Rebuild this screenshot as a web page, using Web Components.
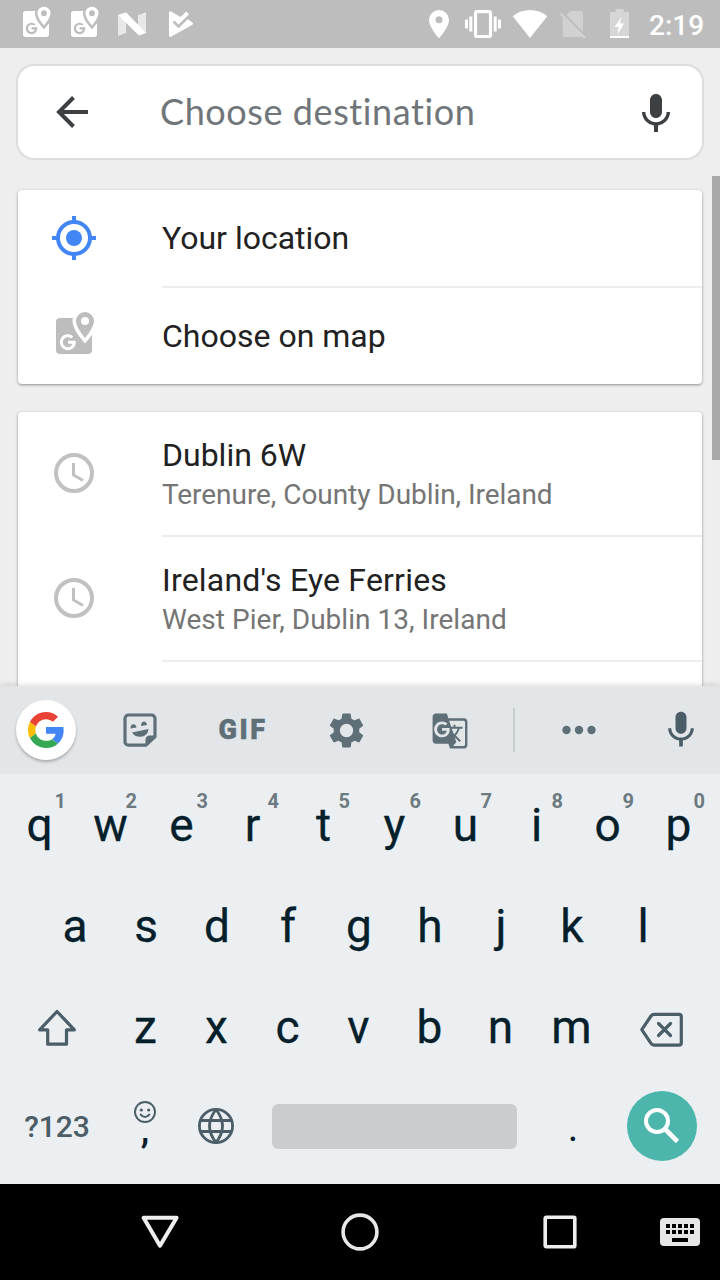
<!DOCTYPE html>
<html lang="en">
<head>
<meta charset="utf-8">
<title>Choose destination</title>
<style>
html,body{margin:0;padding:0}
body{width:720px;height:1280px;overflow:hidden;background:#eee;font-family:Roboto,"Noto Sans",sans-serif}
</style>
</head>
<body>
<directions-screen></directions-screen>
<script>
const MIC='<path fill="currentColor" d="M12 14c1.66 0 2.99-1.34 2.99-3L15 5c0-1.66-1.34-3-3-3S9 3.34 9 5v6c0 1.66 1.34 3 3 3zm5.3-3c0 3-2.54 5.1-5.3 5.1S6.7 14 6.7 11H5c0 3.41 2.72 6.23 6 6.72V21h2v-3.28c3.28-.48 6-3.3 6-6.72h-1.7z"/>';
const MAPS='<rect x="2" y="8" width="36" height="36" rx="4" fill="currentColor"/><path d="M31 2a9 9 0 0 0-9 9c0 6.500 9 17 9 17s9-10.500 9-17a9 9 0 0 0-9-9z" fill="currentColor" stroke="var(--gap,#fff)" stroke-width="7"/><path d="M31 2a9 9 0 0 0-9 9c0 6.500 9 17 9 17s9-10.500 9-17a9 9 0 0 0-9-9z" fill="currentColor"/><circle cx="31" cy="11" r="4" fill="var(--gap,#fff)"/><path d="M18.300 27.500a6.500 6.500 0 1 0 2 4.700h-6.300" fill="none" stroke="var(--gap,#fff)" stroke-width="3"/>';
/* name: [viewBox, width, height, markup] */
const ICONS={
  'st-maps':['0 0 48 48',48,48,`<g transform="translate(1.560 5.200) scale(.722)">${MAPS}</g>`],
  'st-n':['116 0 48 48',48,48,'<path fill="#fff" opacity=".65" d="M118 15l8 7v11l-8 3zM138 15l8-2.800v21l-8-6z"/><path fill="#fff" d="M118 15l8-2.800 20 20.800-7 2.600z"/>'],
  'st-play':['164 0 48 48',48,48,'<path fill="#fff" d="M169 13q0-2.500 2.200-1.500l9.300 5.500 5.700-5.500 2.600 2.600L188 19.500l4.400 2.900q1.500 1.200 0 2.400L171 36.800q-2 .7-2-1.500z"/><path fill="none" stroke="#bdbdbd" stroke-width="2.600" d="M173.500 21.500l5 5L189.500 15.700"/>'],
  'st-pin':['424 0 32 48',32,48,'<path fill="#fff" fill-rule="evenodd" d="M439 10a10 10 0 0 0-10 10c0 7.500 10 18.300 10 18.300s10-10.800 10-18.300a10 10 0 0 0-10-10zm0 6.300a3.500 3.500 0 1 1 0 7 3.500 3.500 0 0 1 0-7z"/>'],
  'st-vibrate':['456 0 50 48',50,48,'<rect x="475.500" y="11.700" width="15" height="24.800" rx="1.500" fill="none" stroke="#fff" stroke-width="3.200"/><path fill="#fff" d="M469.300 16.500h3v15h-3zM465 19.500h3v9h-3zM493.700 16.500h3v15h-3zM498 19.500h3v9h-3z"/>'],
  'st-wifi':['506 0 48 48',48,48,'<path fill="#fff" d="M530 38L512.700 16.300C522.500 8 537.500 8 547.300 16.300z"/>'],
  'st-nosim':['554 0 46 48',46,48,'<path fill="#d1d1d1" d="M571 11h10a2 2 0 0 1 2 2v22a2 2 0 0 1-2 2h-16.300a2 2 0 0 1-2-2V18z"/><path stroke="#bdbdbd" stroke-width="2.500" d="M562 12l24 24.500"/><path stroke="#d1d1d1" stroke-width="2.300" d="M560.500 13.500l24.500 24.500"/>'],
  'st-battery':['600 0 40 48',40,48,'<path fill="#d6d6d6" d="M615.700 9h8v3h5.300v24h-19V12h5.700z"/><path fill="#fff" d="M610 36h19v2h-19zM621.500 17l-6.800 10h4l-1.200 7.500 6.500-11h-4z"/>'],
  back:['54 94 36 36',36,36,'<path fill="none" stroke="#3c4043" stroke-width="4" d="M88 112H59M73.500 97.500L59 112l14.500 14.500"/>'],
  mic:['0 0 24 24',48,48,MIC],
  'mic-small':['0 0 24 24',44,44,MIC],
  location:['0 0 48 48',48,48,'<g fill="none" stroke="#4285f4" stroke-width="4"><circle cx="24" cy="24" r="16"/><path d="M24 2v5M24 41v5M2 24h5M41 24h5"/></g><circle cx="24" cy="24" r="8" fill="#4285f4"/>'],
  maps:['0 0 42 46',42,46,MAPS],
  clock:['0 0 48 48',48,48,'<g fill="none" stroke="#c1c1c1"><circle cx="24" cy="24" r="18" stroke-width="4"/><path stroke-width="3" d="M23.500 14v12l9.500 5.500"/></g>'],
  google:['0 0 48 48',36,36,'<path fill="#EA4335" d="M24 9.500c3.540 0 6.710 1.220 9.210 3.600l6.850-6.850C35.900 2.380 30.470 0 24 0 14.620 0 6.510 5.380 2.560 13.220l7.980 6.190C12.430 13.720 17.740 9.500 24 9.500z"/><path fill="#4285F4" d="M47.500 24.550c0-1.570-.15-3.090-.38-4.550H24v9.020h12.940c-.58 2.960-2.260 5.480-4.780 7.180l7.730 6c4.510-4.180 7.610-10.360 7.610-17.650z"/><path fill="#FBBC05" d="M10.530 28.590c-.48-1.450-.76-2.990-.76-4.590s.27-3.140.76-4.590l-7.980-6.190C.92 16.460 0 20.120 0 24c0 3.880.92 7.540 2.560 10.780l7.970-6.190z"/><path fill="#34A853" d="M24 48c6.480 0 11.930-2.130 15.890-5.810l-7.730-6c-2.150 1.450-4.920 2.300-8.160 2.300-6.260 0-11.570-4.220-13.470-9.910l-7.980 6.190C6.510 42.620 14.620 48 24 48z"/>'],
  sticker:['122 712 36 36',36,36,'<path fill="none" stroke="currentColor" stroke-width="3.200" stroke-linejoin="round" d="M128.500 715h23a3.500 3.500 0 0 1 3.500 3.500V736.500l-9 8.700h-17.500a3.500 3.500 0 0 1-3.500-3.500v-23.200a3.500 3.500 0 0 1 3.500-3.500z"/><path fill="currentColor" d="M145.500 746v-6q0-4.500 4.500-4.500h6v1.500zM130.500 728.500q0-4 2.800-4.200 2.700 0 3.200 3.200zM141 726q0-4.300 2.800-4.600 2.700 0 3.300 3.600zM132 732.500l16.500-3.500q-.5 7-7.500 7.700-6.500.3-9-4.200z"/>'],
  gear:['0 0 24 24',41,41,'<path fill="currentColor" d="M19.430 12.980c.04-.32.07-.64.07-.98s-.03-.66-.07-.98l2.110-1.650c.19-.15.24-.42.12-.64l-2-3.460c-.12-.22-.39-.3-.61-.22l-2.490 1c-.52-.4-1.080-.73-1.690-.98l-.38-2.650C14.460 2.180 14.250 2 14 2h-4c-.25 0-.46.18-.49.42l-.38 2.650c-.61.25-1.170.59-1.690.98l-2.490-1c-.23-.09-.49 0-.61.22l-2 3.460c-.13.22-.07.49.12.64l2.110 1.650c-.04.32-.07.65-.07.98s.03.66.07.98l-2.110 1.650c-.19.15-.24.42-.12.64l2 3.460c.12.22.39.3.61.22l2.490-1c.52.4 1.080.73 1.690.98l.38 2.650c.03.24.24.42.49.42h4c.25 0 .46-.18.49-.42l.38-2.650c.61-.25 1.170-.59 1.690-.98l2.490 1c.23.09.49 0 .61-.22l2-3.460c.12-.22.07-.49-.12-.64l-2.110-1.650zM12 15.900a3.900 3.900 0 1 1 0-7.800 3.900 3.900 0 0 1 0 7.800z"/>'],
  translate:['0 0 24 24',38,38,'<path fill="currentColor" d="M21 4H11l-1-3H3c-1.100 0-2 .9-2 2v15c0 1.100.9 2 2 2h8l1 3h9c1.100 0 2-.9 2-2V6c0-1.100-.9-2-2-2zM7 16c-2.760 0-5-2.240-5-5s2.240-5 5-5c1.350 0 2.480.5 3.350 1.300L9.030 8.570c-.38-.36-1.040-.78-2.030-.78-1.740 0-3.150 1.440-3.150 3.210S5.260 14.210 7 14.210c2.010 0 2.840-1.440 2.920-2.410H7v-1.710h4.680c.07.31.12.61.12 1.020C11.800 13.970 9.890 16 7 16zm6.170-5.420h3.700c-.43 1.250-1.110 2.430-2.050 3.470-.31-.35-.6-.72-.86-1.100l-.79-2.370zm8.330 9.920c0 .55-.45 1-1 1H14l2-2.500-1.040-3.100 3.100 3.100.92-.92-3.300-3.250.02-.02c1.130-1.250 1.930-2.690 2.400-4.220H20v-1.300h-4.530V8h-1.290v1.290h-1.440L11.460 5.500h9.040c.55 0 1 .45 1 1v14z"/>'],
  more:['0 0 36 10',36,10,'<g fill="currentColor"><circle cx="5.500" cy="5" r="4.200"/><circle cx="18" cy="5" r="4.200"/><circle cx="30.500" cy="5" r="4.200"/></g>'],
  shift:['36 1008 42 40',42,40,'<path fill="none" stroke="currentColor" stroke-width="3.200" stroke-linejoin="round" d="M57 1011.500L39.600 1029.800H47.700V1044.200H66.500V1029.800H74.400z"/>'],
  backspace:['639 1010 46 40',46,40,'<path fill="none" stroke="currentColor" stroke-width="3.200" stroke-linejoin="round" d="M641.800 1029.700L651 1016q1.200-1.700 3-1.700H679q2.300 0 2.300 2.300v26.200q0 2.300-2.300 2.300H654q-1.800 0-3-1.700z"/><path fill="none" stroke="currentColor" stroke-width="3.200" stroke-linecap="round" d="M658.500 1023.500l12 12M670.500 1023.500l-12 12"/>'],
  smile:['0 0 24 24',24,24,'<g fill="none" stroke="currentColor" stroke-width="1.900"><circle cx="12" cy="12" r="10"/><path stroke-linecap="round" d="M7.600 14.500q4.400 5 8.800 0"/></g><circle cx="8.300" cy="10" r="1.600" fill="currentColor"/><circle cx="15.700" cy="10" r="1.600" fill="currentColor"/>'],
  globe:['0 0 38 38',38,38,'<g fill="none" stroke="currentColor" stroke-width="2.800"><circle cx="19" cy="19" r="16.600"/><path d="M3.500 13.500h31M3.500 24.500h31M19 2.500Q6 19 19 35.500M19 2.500Q32 19 19 35.500"/></g>'],
  search:['627 1091 70 70',70,70,'<g fill="none" stroke="#fff"><circle cx="657" cy="1121" r="11" stroke-width="4"/><path stroke-width="4.600" d="M665.500 1129.500l12 12"/></g>'],
  'nav-back':['0 0 40 40',40,40,'<path fill="none" stroke="#eee" stroke-width="4" stroke-linejoin="round" d="M3.600 5.800h33L20 33.700z"/>'],
  'nav-home':['0 0 40 40',40,40,'<circle cx="20" cy="20" r="16.900" fill="none" stroke="#e8e8e8" stroke-width="3.600"/>'],
  'nav-recent':['0 0 40 40',40,40,'<rect x="5.200" y="5.200" width="29.600" height="29.600" rx="1" fill="none" stroke="#eee" stroke-width="3.600"/>'],
  'nav-keyboard':['0 0 40 28',40,28,'<rect width="40" height="28" rx="4" fill="#e6e6e6"/><path d="M6 6h4v4H6zM12 6h4v4h-4zM18 6h4v4h-4zM24 6h4v4h-4zM30 6h4v4h-4zM6 12h4v4H6zM12 12h4v4h-4zM18 12h4v4h-4zM24 12h4v4h-4zM30 12h4v4h-4zM12 20h16v4H12z"/>']
};
const define=(name,render)=>customElements.define(name,class extends HTMLElement{
  connectedCallback(){
    if(this.shadowRoot)return;
    this.attachShadow({mode:'open'}).innerHTML=render(this);
  }
});

define('ui-icon',el=>{
  const [vb,w,h,body]=ICONS[el.getAttribute('name')];
  return `<style>:host{display:block;flex:none;width:${w}px;height:${h}px}svg{display:block}</style><svg width="${w}" height="${h}" viewBox="${vb}" aria-hidden="true">${body}</svg>`;
});

define('status-bar',()=>`<style>
:host{display:flex;height:48px;background:#bdbdbd;color:#fff;--gap:#bdbdbd;padding-left:20px;flex:none}
.right{display:flex;margin-left:auto}
.time{width:71px;padding-left:9px;font:500 28px/51px Roboto,sans-serif;white-space:nowrap}
</style><ui-icon name="st-maps"></ui-icon><ui-icon name="st-maps"></ui-icon><ui-icon name="st-n"></ui-icon><ui-icon name="st-play"></ui-icon>
<div class="right"><ui-icon name="st-pin"></ui-icon><ui-icon name="st-vibrate"></ui-icon><ui-icon name="st-wifi"></ui-icon><ui-icon name="st-nosim"></ui-icon><ui-icon name="st-battery"></ui-icon><span class="time">2:19</span></div>`);

define('search-box',()=>`<style>
:host{display:flex;align-items:center;box-sizing:border-box;height:96px;margin:16px 16px 0;padding:0 22px 0 36px;border:2px solid #dadce0;border-radius:18px;background:#fff;flex:none;color:#3c4043}
.hint{margin-left:70px;flex:1;font:400 36px/44px Lato,"Open Sans",sans-serif;color:#70757a;white-space:nowrap;letter-spacing:.58px;padding-bottom:2px}
.mic{padding-top:4px}
</style><ui-icon name="back"></ui-icon><span class="hint"><slot></slot></span><div class="mic"><ui-icon name="mic"></ui-icon></div>`);

define('result-card',()=>`<style>
:host{display:block;margin-bottom:28px;background:#fff;border-radius:4px;box-shadow:0 1px 3px rgba(0,0,0,.4)}
</style><slot></slot>`);

define('result-row',el=>`<style>
:host{display:grid;grid-template-columns:112px 1fr;height:${el.hasAttribute('tall')?125:el.hasAttribute('last')?96:98}px}
.icon{display:grid;place-items:center;color:#bdbdbd;padding-bottom:${{location:2,maps:6,clock:3}[el.getAttribute('icon')]}px;${el.getAttribute('icon')==='maps'?'padding-left:2px':''}}
.text{margin-left:32px;display:flex;flex-direction:column;justify-content:center;box-sizing:border-box;border-bottom:2px solid #ededed;white-space:nowrap}
:host([last]) .text{border-bottom-color:transparent;padding-top:2px}
.title{font-size:32px;line-height:40px;color:#212121;letter-spacing:var(--title-tracking,0)}
.sub{font-size:28px;line-height:38px;color:#757575;padding-top:1px;margin-bottom:-1px;letter-spacing:var(--sub-tracking,-.05px)}
</style><div class="icon"><ui-icon name="${el.getAttribute('icon')}"></ui-icon></div><div class="text"><span class="title"><slot></slot></span>${el.hasAttribute('sub')?`<span class="sub">${el.getAttribute('sub')}</span>`:''}</div>`);

define('result-list',()=>`<style>
:host{display:flex;height:510px;margin-top:16px;overflow:hidden;flex:none}
.cards{flex:1;padding:14px 10px 0 18px}
.bar{width:8px;height:284px;background:#a9a9a9}
</style><div class="cards"><slot></slot></div><div class="bar"></div>`);

define('key-cap',el=>`<style>
:host{display:block;position:relative;height:101px;font-size:46px;line-height:102px;text-align:center;color:#05202b;-webkit-text-stroke:.3px #05202b}
sup{position:absolute;left:50%;margin-left:15px;top:16px;font:700 20px/22px Roboto,sans-serif;color:#6d7a80;-webkit-text-stroke:0}
</style><slot></slot>${el.hasAttribute('hint')?`<sup>${el.getAttribute('hint')}</sup>`:''}`);

define('keyboard-toolbar',()=>`<style>
:host{display:grid;grid-template-columns:92px 96px 108px 101px 106px 21px 110px 86px;height:88px;background:#e2e6e9;color:#5f6f77;place-items:center}
.g{display:grid;place-items:center;width:60px;height:60px;border-radius:50%;background:#fff;box-shadow:0 2px 3px rgba(0,0,0,.25)}
.gif{font:900 27px/30px Roboto,sans-serif;letter-spacing:2.500px;margin-right:-2px;-webkit-text-stroke:.5px currentColor}
.sep{width:2px;height:44px;background:#c8cdd0}
.mic{color:#4b5d66;padding:0 0 0 8px}
.down{padding-top:1px}
</style><div class="g"><ui-icon name="google"></ui-icon></div><ui-icon name="sticker"></ui-icon><span class="gif">GIF</span><div class="down"><ui-icon name="gear"></ui-icon></div><div class="down"><ui-icon name="translate"></ui-icon></div><div class="sep"></div><ui-icon name="more"></ui-icon><div class="mic"><ui-icon name="mic-small"></ui-icon></div>`);

const keys=(s,hints)=>[...s].map((c,i)=>`<key-cap${hints?` hint="${hints[i]}"`:''}>${c}</key-cap>`).join('');
define('soft-keyboard',()=>`<style>
:host{display:block;position:relative;height:498px;background:#ebeff2;color:#4b5d66;box-shadow:0 -1px 6px rgba(0,0,0,.14);flex:none}
.row{display:grid;height:101px}
.r1{grid-template-columns:repeat(10,71px);padding-left:4px}
.r2{grid-template-columns:repeat(9,71px);padding-left:39.500px}
.r3{grid-template-columns:110px repeat(7,71px) 106px;align-items:center}
.r4{grid-template-columns:114px 62px 80px 277px 80px 98px;place-items:center;height:98px}
.shift,.del{display:grid;place-items:center;padding:3px 0 0 4px}
.del{padding:6px 0 0 4px}
.sym{font:500 30px/36px Roboto,sans-serif;padding-top:1px}
.comma{display:grid;justify-items:center;padding-bottom:2px}
.punct{font-size:40px;line-height:40px;color:#05202b}
.comma .punct{font-weight:500;line-height:30px;height:34px;margin-top:-10px}
.comma .punct{font-size:38px;padding-bottom:3px}
.dot{padding-top:4px}
.space{width:245px;height:45px;border-radius:6px;background:#c9cdd0;margin-top:1px}
.go{width:70px;height:70px;border-radius:50%;background:#4db6ac}
</style><keyboard-toolbar></keyboard-toolbar>
<div class="row r1">${keys('qwertyuiop','1234567890')}</div>
<div class="row r2">${keys('asdfghjkl')}</div>
<div class="row r3"><div class="shift"><ui-icon name="shift"></ui-icon></div>${keys('zxcvbnm')}<div class="del"><ui-icon name="backspace"></ui-icon></div></div>
<div class="row r4"><span class="sym">?123</span><div class="comma"><ui-icon name="smile"></ui-icon><span class="punct">,</span></div><ui-icon name="globe"></ui-icon><div class="space"></div><span class="punct dot">.</span><div class="go"><ui-icon name="search"></ui-icon></div></div>`);

define('nav-bar',()=>`<style>
:host{display:grid;grid-template-columns:200px 200px 200px 60px;padding-left:60px;height:96px;background:#000;place-items:center;flex:none}
ui-icon:last-child{justify-self:start}
</style><ui-icon name="nav-back"></ui-icon><ui-icon name="nav-home"></ui-icon><ui-icon name="nav-recent"></ui-icon><ui-icon name="nav-keyboard"></ui-icon>`);

define('directions-screen',()=>`<style>
:host{display:flex;flex-direction:column;width:720px;height:1280px;overflow:hidden;background:#eee}
.wide{--title-tracking:.2px;--sub-tracking:.03px}
</style><status-bar></status-bar><search-box>Choose destination</search-box>
<result-list>
<result-card><result-row icon="location">Your location</result-row><result-row icon="maps" last>Choose on map</result-row></result-card>
<result-card><result-row tall icon="clock" sub="Terenure, County Dublin, Ireland">Dublin 6W</result-row><result-row class="wide" tall icon="clock" sub="West Pier, Dublin 13, Ireland">Ireland's Eye Ferries</result-row><result-row tall last icon="clock"></result-row></result-card>
</result-list>
<soft-keyboard></soft-keyboard><nav-bar></nav-bar>`);
</script>
</body>
</html>
